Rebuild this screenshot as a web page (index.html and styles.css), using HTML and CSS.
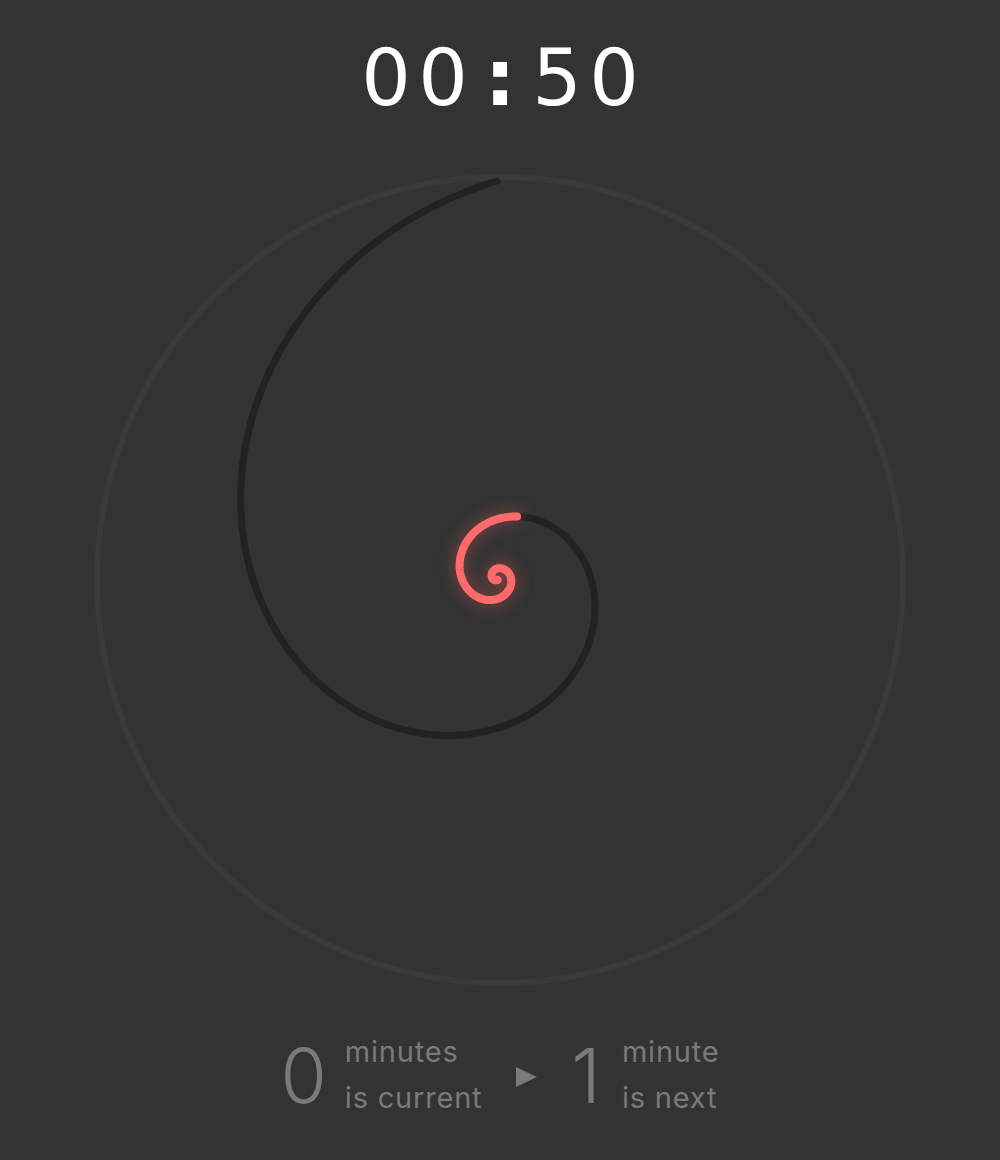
FILE: index.html
```html
<!DOCTYPE html>
<html lang="en">
<head>
<meta charset="utf-8">
<title>Spiral Timer</title>
<link rel="stylesheet" href="styles.css">
</head>
<body>
<main class="app">
  <div class="clock"><span class="ch">0</span><span class="ch">0</span><span class="ch sep">:</span><span class="ch">5</span><span class="ch">0</span></div>
  <svg class="dial" viewBox="90 170 820 820" width="820" height="820">
    <circle class="ring" cx="500" cy="580" r="403"></circle>
    <path class="track" id="track" d=""></path>
    <path class="elapsed" id="elapsed" d=""></path>
  </svg>
  <div class="legend">
    <div class="item">
      <span class="num">0</span>
      <span class="label">minutes<br>is current</span>
    </div>
    <span class="arrow"></span>
    <div class="item next">
      <span class="num">1</span>
      <span class="label">minute<br>is next</span>
    </div>
  </div>
</main>
<script src="script.js"></script>
</body>
</html>
```
FILE: styles.css
```css
html, body {
  margin: 0;
  padding: 0;
  background: #333333;
}
.app {
  display: flex;
  flex-direction: column;
  align-items: center;
  height: 1160px;
}
.clock {
  margin-top: 39px;
  display: flex;
  font-family: "DejaVu Sans", "Liberation Sans", sans-serif;
  font-size: 78px;
  line-height: 78px;
  color: #ffffff;
}
.ch {
  width: 57px;
  text-align: center;
}
.sep {
  font-weight: bold;
}
.dial {
  display: block;
  margin-top: 53px;
}
.ring {
  fill: none;
  stroke: #3a3a3a;
  stroke-width: 6;
}
.track {
  fill: none;
  stroke: #222222;
  stroke-width: 7;
  stroke-linecap: round;
}
.elapsed {
  fill: none;
  stroke: #ff6b6b;
  stroke-width: 8;
  stroke-linecap: round;
  filter: drop-shadow(0 0 8px rgba(255, 90, 90, 0.5));
}
.legend {
  margin-top: 39px;
  display: flex;
  align-items: center;
  font-family: Inter, "Noto Sans", sans-serif;
  color: #7a7a7a;
}
.item {
  display: flex;
  align-items: center;
  gap: 18px;
}
.item.next {
  gap: 21px;
}
.num {
  font-size: 75px;
  line-height: 75px;
  font-weight: 300;
}
.label {
  font-size: 29px;
  line-height: 46px;
  letter-spacing: 0.8px;
}
.arrow {
  width: 0;
  height: 0;
  border-left: 21px solid #7a7a7a;
  border-top: 10px solid transparent;
  border-bottom: 10px solid transparent;
  margin: 4px 34px 0 34px;
}
```
FILE: script.js
```js
(function () {
  var cx = 497, cy = 577;
  var phi = (1 + Math.sqrt(5)) / 2;
  var b = Math.log(phi) / (Math.PI / 2);
  var rEnd = 396, aEnd = 1.5 * Math.PI;
  function pt(a) {
    var r = rEnd * Math.exp(b * (a - aEnd));
    return [cx + r * Math.cos(a), cy + r * Math.sin(a)];
  }
  function build(a0, a1) {
    var n = Math.ceil((a1 - a0) / 0.01);
    var d = "";
    for (var i = 0; i <= n; i++) {
      var a = a0 + (a1 - a0) * i / n;
      var p = pt(a);
      d += (i === 0 ? "M" : "L") + p[0].toFixed(2) + " " + p[1].toFixed(2);
    }
    return d;
  }
  var aStart = aEnd + Math.log(3 / rEnd) / b;
  var aSplit = -1.25;
  document.getElementById("track").setAttribute("d", build(aSplit - 0.05, aEnd));
  document.getElementById("elapsed").setAttribute("d", build(aStart, aSplit));
})();
```
